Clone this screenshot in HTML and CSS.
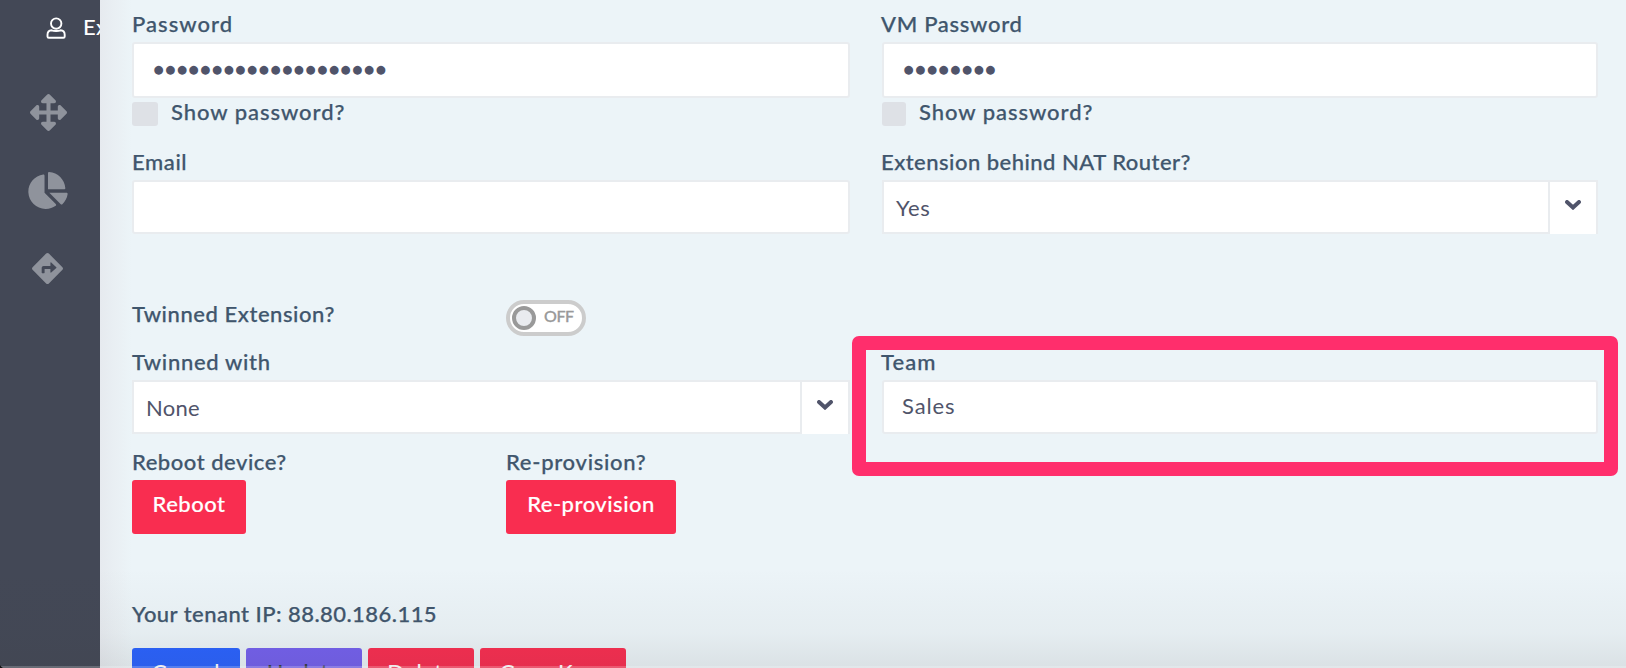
FILE: index.html
```
<!DOCTYPE html>
<html lang="en"><head><meta charset="utf-8"><title>Extension settings</title><link rel="stylesheet" href="styles.css"></head>
<body>
<nav class="sidebar">
  <div class="user-item">
    <svg class="user" viewBox="0 0 20 22"><circle cx="10.200" cy="6.600" r="5.200"/><path d="M5.600 13.300C3 13.400 1.500 15.400 1.500 17.800v1.700q0 1.300 1.300 1.300h14.600q1.300 0 1.300-1.300v-1.700c0-2.400-1.500-4.400-4.100-4.500-2 .9-7 .9-9 0z"/></svg>
    <span>Ex</span>
  </div>
  <svg class="nav-icon move" viewBox="0 0 512 512"><path d="M352.200 425.800l-79.200 79.200c-9.400 9.400-24.600 9.400-33.900 0l-79.200-79.200c-15.100-15.100-4.400-41 17-41h51.200L228 284H127.200v51.200c0 21.400-25.900 32.100-41 17L7 273c-9.400-9.400-9.400-24.600 0-33.900L86.200 160c15.100-15.100 41-4.400 41 17v51H228V127.200h-51.200c-21.400 0-32.100-25.900-17-41L239 7c9.400-9.400 24.600-9.400 33.900 0l79.200 79.200c15.100 15.100 4.400 41-17 41H284V228h100.800v-51c0-21.400 25.900-32.100 41-17l79.200 79.200c9.400 9.400 9.400 24.600 0 33.900L425.800 352.200c-15.100 15.100-41 4.400-41-17V284H284v100.800h51.200c21.400 0 32.100 25.900 17 41z"/></svg>
  <svg class="nav-icon pie" viewBox="0 0 544 512"><path d="M527.800 288H290.500l158 158c6 6 15.800 6.500 22.200.8 38.700-36.500 65.300-85.600 73.100-140.900 1.300-9.500-6.500-17.900-16-17.900zm-15.800-64.200C503.700 103.700 408.300 8.300 288.200 0 279 .6 272 7.100 272 16.200V240h223.800c9.100 0 16.800-7.700 16.200-16.200zM224 288V50.700c0-9.500-8.400-17.300-17.800-16C86.300 51.700-4.100 155.600.1 280.400 4.400 408.500 114.800 513.600 243 512c50.400-.6 97-16.900 135.200-44 7.900-5.600 8.400-17.200 1.600-24z"/></svg>
  <svg class="nav-icon directions" viewBox="0 0 512 512"><path d="M502.600 233.300 278.700 9.400c-12.500-12.500-32.800-12.500-45.400 0L9.400 233.300c-12.500 12.500-12.500 32.800 0 45.400l223.900 223.900c12.500 12.500 32.800 12.500 45.400 0l223.900-223.900c12.500-12.500 12.500-32.800 0-45.400zm-101 12.600-84.200 77.700c-5.100 4.700-13.400 1.100-13.400-5.900V264h-96v64c0 4.400-3.600 8-8 8h-32c-4.400 0-8-3.600-8-8v-80c0-17.700 14.300-32 32-32h112v-53.700c0-7 8.300-10.600 13.400-5.900l84.200 77.700c3.400 3.200 3.400 8.600 0 11.800z"/></svg>
</nav>
<main class="content">
  <section class="row passwords">
    <div><label class="l-pass">Password</label><div class="field tall"><span class="dots">●●●●●●●●●●●●●●●●●●●●</span></div><div class="check"><i class="wide"></i><label class="l-show">Show password?</label></div></div>
    <div><label class="l-vm">VM Password</label><div class="field tall"><span class="dots">●●●●●●●●</span></div><div class="check"><i></i><label class="l-show">Show password?</label></div></div>
  </section>
  <section class="row network">
    <div><label class="l-email">Email</label><div class="field"></div></div>
    <div><label class="l-nat">Extension behind NAT Router?</label><div class="field select"><span class="v-yes">Yes</span><b><svg viewBox="0 0 16 10"><path d="M2 2l6 5.500L14 2"/></svg></b></div></div>
  </section>
  <section class="twin-toggle"><label class="l-twinext">Twinned Extension?</label><div class="toggle"><i></i><span>OFF</span></div></section>
  <section class="row twin">
    <div><label class="l-twin">Twinned with</label><div class="field select"><span class="v-none">None</span><b><svg viewBox="0 0 16 10"><path d="M2 2l6 5.500L14 2"/></svg></b></div></div>
    <div class="team"><label class="l-team">Team</label><div class="field"><span class="v-sales">Sales</span></div></div>
  </section>
  <section class="device">
    <div><label class="l-reboot">Reboot device?</label><button class="btn reboot"><span>Reboot</span></button></div>
    <div><label class="l-reprov">Re-provision?</label><button class="btn reprov"><span>Re-provision</span></button></div>
  </section>
  <label class="tenant">Your tenant IP: 88.80.186.115</label>
  <section class="actions"><button class="btn cancel">Cancel</button><button class="btn update">Update</button><button class="btn delete">Delete</button><button class="btn copy">Copy Keys</button></section>
</main>
<div class="fade"></div>
</body></html>
```
FILE: styles.css
```
*{box-sizing:border-box}
body{margin:0;width:1626px;height:668px;overflow:hidden;display:flex;background:#ecf4f8;font:500 22px/30px Lato,"Noto Sans",sans-serif;color:#40566d;position:relative}
.sidebar{width:100px;height:668px;flex:none;background:#434856;overflow:hidden;display:flex;flex-direction:column;align-items:flex-start}
.user-item{display:flex;align-items:center;gap:17px;height:56px;padding-left:46px;width:100px;white-space:nowrap;overflow:hidden;color:#fff}
.user-item span{position:relative;top:-1px;letter-spacing:.3px}
.user{width:20px;height:22px;flex:none;fill:none;stroke:#fff;stroke-width:1.900}
.nav-icon{fill:#8f939c}
.move{width:37px;height:37px;margin:38px 0 0 29.500px}
.pie{width:40px;height:37px;margin:41px 0 0 28px}
.directions{width:31px;height:31px;margin:44px 0 0 32px}
.content{flex:1;min-width:0;height:668px;overflow:hidden;padding:10px 28px 0 32px;background:linear-gradient(90deg,#e6eaef,#e9eff3 14px,#ecf4f8 32px)}
label{display:block;white-space:nowrap;height:32px;line-height:28px;-webkit-text-stroke:.25px #40566d}
.l-pass{letter-spacing:1.050px}
.l-show{letter-spacing:.95px}
.l-vm{letter-spacing:.7px}
.l-email{letter-spacing:.6px}
.l-nat{letter-spacing:.48px}
.l-twinext{letter-spacing:.56px}
.l-twin{letter-spacing:.68px}
.l-team{letter-spacing:1.100px}
.l-reboot{letter-spacing:.53px}
.l-reprov{letter-spacing:.72px}
.l-vm,.l-nat,.l-team{margin-left:-1px}
.row{display:grid;grid-template-columns:718px 716px;gap:32px}
.field{height:54px;border:2px solid #e9ecef;border-radius:3px;background:#fff;color:#50546a;padding:0 18px;font-weight:400;display:flex;align-items:center}
.tall{height:56px}
.dots{font:11.500px/20px "DejaVu Sans",sans-serif;letter-spacing:1.660px;padding-left:1.500px;position:relative;top:-1px}
.v-yes{letter-spacing:.6px}
.v-none{letter-spacing:.3px}
.v-sales{letter-spacing:.9px;position:relative;top:-1px}
.check{display:flex;padding-top:4px;height:50px;gap:13px}
.check i{width:24px;height:24px;background:#dee1e6;border-radius:3px}
.check .wide{width:26px}
.check label{margin-top:-4px}
.select{border-radius:0;padding:0 0 0 12px;justify-content:space-between}
.select span{position:relative;top:1px}
.select b{width:48px;height:54px;background:#fff;border-left:2px solid #e9ecef;border-top:2px solid #e9ecef;display:flex;align-items:center;justify-content:center;flex:none;padding:0 1px 7px 0}
.select b svg{width:16px;height:10px;fill:none;stroke:#50546a;stroke-width:4;stroke-linecap:round}
.twin-toggle{display:flex;margin-top:66px;height:48px}
.twin-toggle label{width:374px}
.toggle{width:80px;height:36px;border:4px solid #ccc;border-radius:18px;background:#fff;display:flex;align-items:center;padding-left:2px;gap:8px}
.toggle i{width:24px;height:24px;border:4px solid #999;border-radius:50%;background:#e9ebef}
.toggle span{font-size:16px;font-weight:500;letter-spacing:-.4px;-webkit-text-stroke:.3px #999;color:#999;line-height:24px;margin-top:-4px}
.team{position:relative}
.team::after{content:"";box-sizing:border-box;position:absolute;left:-30px;top:-12.500px;width:766px;height:140px;border:14px solid #ff2e6c;border-radius:7px}
.device{display:grid;grid-template-columns:374px 200px;margin-top:14px}
.btn{display:block;border:0;border-radius:3px;background:#f92d50;color:#fff;height:54px;font:500 22px/30px Lato,sans-serif;padding:0 0 7px;white-space:nowrap;letter-spacing:.5px;-webkit-text-stroke:.2px currentColor}
.reboot{width:114px}.reprov{width:170px}
.tenant{margin-top:66px;height:48px;letter-spacing:.46px}
.cancel,.update,.delete,.copy{-webkit-text-stroke:0}
.actions{display:flex;gap:6px}
.cancel{width:108px;background:#2962ff}.update{width:116px;background:#7460ee;color:#343a40}.delete{width:106px}.copy{width:146px}
.fade{position:absolute;left:0;top:568px;width:1626px;height:100px;background:radial-gradient(circle at 8px -8px,transparent 0,transparent 100%),linear-gradient(0deg,rgba(255,255,255,.2) 2px,transparent 2px),linear-gradient(180deg,transparent,rgba(60,60,60,.04) 65%,rgba(60,60,60,.1))}
.fade::before{content:"";position:absolute;left:0;bottom:0;width:8px;height:8px;background:radial-gradient(circle at 8px 0,transparent 9px,#111 10px)}
```
